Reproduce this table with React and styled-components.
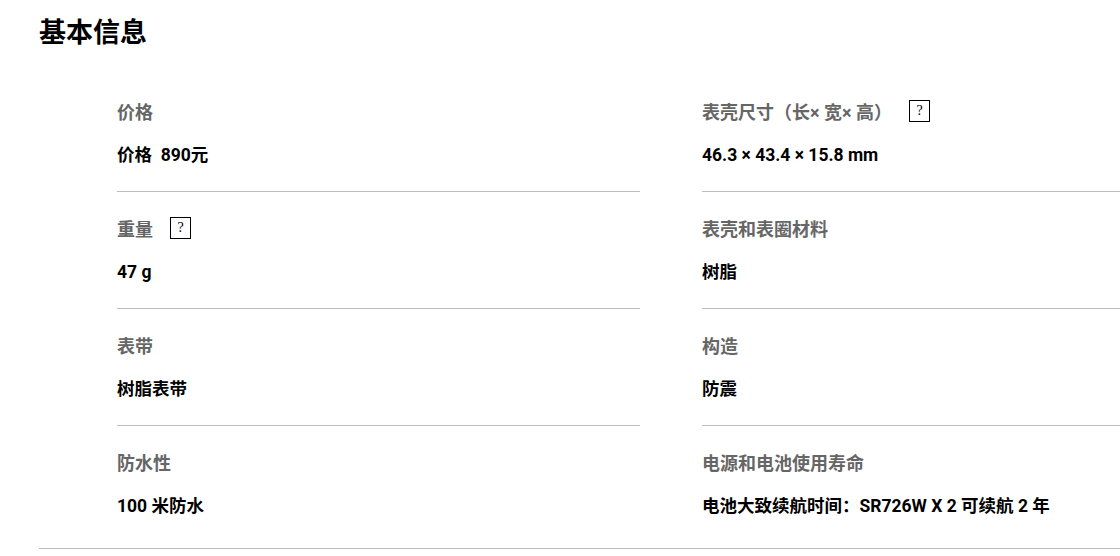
import styled, { createGlobalStyle } from 'styled-components';

const GlobalStyle = createGlobalStyle`
	html, body {
		margin: 0;
		padding: 0;
		background: #fff;
		overflow: hidden;
	}
	body {
		font-family: Roboto, "Noto Sans CJK SC", sans-serif;
		color: #000;
	}
`;

const specs = [
	{ label: '价格', value: '价格  890元' },
	{ label: '表壳尺寸（长× 宽× 高）', value: '46.3 × 43.4 × 15.8 mm', help: true },
	{ label: '重量', value: '47 g', help: true },
	{ label: '表壳和表圈材料', value: '树脂' },
	{ label: '表带', value: '树脂表带' },
	{ label: '构造', value: '防震' },
	{ label: '防水性', value: '100 米防水' },
	{ label: '电源和电池使用寿命', value: '电池大致续航时间：SR726W X 2 可续航 2 年' },
];

const App = () => {
	return (
		<>
			<GlobalStyle />
			<Section>
				<Heading>基本信息</Heading>
				<SpecGrid>
					{specs.map((spec, i) => (
						<SpecItem key={spec.label} $last={i >= specs.length - 2}>
							<Label>
								{spec.label}
								{spec.help && <Help>?</Help>}
							</Label>
							<Value>{spec.value}</Value>
						</SpecItem>
					))}
				</SpecGrid>
			</Section>
		</>
	);
};

// styled components
const Section = styled.section`
	margin-left: 39px;
	padding-bottom: 5px;
	border-bottom: 1px solid #bdbdbd;
`;

const Heading = styled.h2`
	margin: 0;
	height: 75px;
	padding-top: 16px;
	box-sizing: border-box;
	font-size: 27px;
	line-height: 30px;
	font-weight: 700;
	font-family: "Noto Sans CJK SC", sans-serif;
`;

const SpecGrid = styled.div`
	display: grid;
	grid-template-columns: 523px minmax(0, 1fr);
	column-gap: 62px;
	margin-left: 78px;
`;

const SpecItem = styled.div`
	padding: 23px 0 23px;
	border-bottom: ${(p) => (p.$last ? 'none' : '1px solid #bdbdbd')};
	height: ${(p) => (p.$last ? '117px' : 'auto')};
	box-sizing: border-box;
`;

const Label = styled.div`
	display: flex;
	align-items: center;
	height: 25px;
	font-size: 18px;
	font-weight: 700;
	color: #666;
	white-space: pre;
`;

const Help = styled.span`
	display: inline-flex;
	align-items: center;
	justify-content: center;
	width: 19px;
	height: 20px;
	margin-left: 17px;
	border: 1px solid #000;
	font-family: "Liberation Serif", serif;
	font-size: 14px;
	font-weight: 400;
	color: #000;
`;

const Value = styled.div`
	margin-top: 20px;
	height: 25px;
	line-height: 25px;
	font-size: 17.5px;
	font-weight: 700;
	white-space: pre;
`;

export default App;
